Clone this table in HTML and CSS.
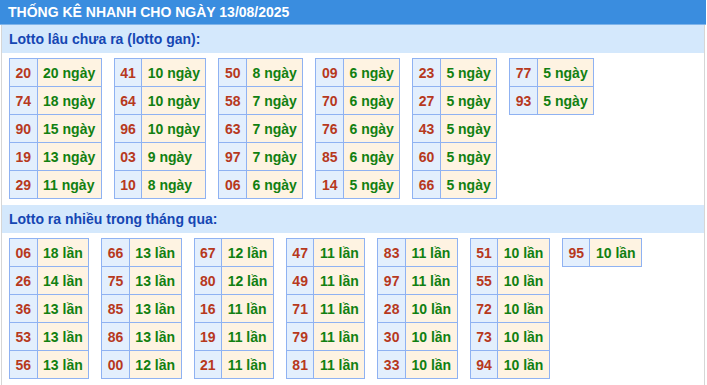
FILE: index.html
```html
<!DOCTYPE html>
<html lang="vi">
<head>
<meta charset="utf-8">
<title>Thống kê nhanh</title>
<link rel="stylesheet" href="styles.css">
</head>
<body>
<div class="box">
  <div class="title">THỐNG KÊ NHANH CHO NGÀY 13/08/2025</div>
  <div class="content">
    <div class="subhead">Lotto lâu chưa ra (lotto gan):</div>
    <div class="tables">
      <table class="t"><tr><td class="n">20</td><td class="v">20 ngày</td></tr><tr><td class="n">74</td><td class="v">18 ngày</td></tr><tr><td class="n">90</td><td class="v">15 ngày</td></tr><tr><td class="n">19</td><td class="v">13 ngày</td></tr><tr><td class="n">29</td><td class="v">11 ngày</td></tr></table>
      <table class="t"><tr><td class="n">41</td><td class="v">10 ngày</td></tr><tr><td class="n">64</td><td class="v">10 ngày</td></tr><tr><td class="n">96</td><td class="v">10 ngày</td></tr><tr><td class="n">03</td><td class="v">9 ngày</td></tr><tr><td class="n">10</td><td class="v">8 ngày</td></tr></table>
      <table class="t"><tr><td class="n">50</td><td class="v">8 ngày</td></tr><tr><td class="n">58</td><td class="v">7 ngày</td></tr><tr><td class="n">63</td><td class="v">7 ngày</td></tr><tr><td class="n">97</td><td class="v">7 ngày</td></tr><tr><td class="n">06</td><td class="v">6 ngày</td></tr></table>
      <table class="t"><tr><td class="n">09</td><td class="v">6 ngày</td></tr><tr><td class="n">70</td><td class="v">6 ngày</td></tr><tr><td class="n">76</td><td class="v">6 ngày</td></tr><tr><td class="n">85</td><td class="v">6 ngày</td></tr><tr><td class="n">14</td><td class="v">5 ngày</td></tr></table>
      <table class="t"><tr><td class="n">23</td><td class="v">5 ngày</td></tr><tr><td class="n">27</td><td class="v">5 ngày</td></tr><tr><td class="n">43</td><td class="v">5 ngày</td></tr><tr><td class="n">60</td><td class="v">5 ngày</td></tr><tr><td class="n">66</td><td class="v">5 ngày</td></tr></table>
      <table class="t"><tr><td class="n">77</td><td class="v">5 ngày</td></tr><tr><td class="n">93</td><td class="v">5 ngày</td></tr></table>
    </div>
    <div class="subhead">Lotto ra nhiều trong tháng qua:</div>
    <div class="tables">
      <table class="t"><tr><td class="n">06</td><td class="v">18 lần</td></tr><tr><td class="n">26</td><td class="v">14 lần</td></tr><tr><td class="n">36</td><td class="v">13 lần</td></tr><tr><td class="n">53</td><td class="v">13 lần</td></tr><tr><td class="n">56</td><td class="v">13 lần</td></tr></table>
      <table class="t"><tr><td class="n">66</td><td class="v">13 lần</td></tr><tr><td class="n">75</td><td class="v">13 lần</td></tr><tr><td class="n">85</td><td class="v">13 lần</td></tr><tr><td class="n">86</td><td class="v">13 lần</td></tr><tr><td class="n">00</td><td class="v">12 lần</td></tr></table>
      <table class="t"><tr><td class="n">67</td><td class="v">12 lần</td></tr><tr><td class="n">80</td><td class="v">12 lần</td></tr><tr><td class="n">16</td><td class="v">11 lần</td></tr><tr><td class="n">19</td><td class="v">11 lần</td></tr><tr><td class="n">21</td><td class="v">11 lần</td></tr></table>
      <table class="t"><tr><td class="n">47</td><td class="v">11 lần</td></tr><tr><td class="n">49</td><td class="v">11 lần</td></tr><tr><td class="n">71</td><td class="v">11 lần</td></tr><tr><td class="n">79</td><td class="v">11 lần</td></tr><tr><td class="n">81</td><td class="v">11 lần</td></tr></table>
      <table class="t"><tr><td class="n">83</td><td class="v">11 lần</td></tr><tr><td class="n">97</td><td class="v">11 lần</td></tr><tr><td class="n">28</td><td class="v">10 lần</td></tr><tr><td class="n">30</td><td class="v">10 lần</td></tr><tr><td class="n">33</td><td class="v">10 lần</td></tr></table>
      <table class="t"><tr><td class="n">51</td><td class="v">10 lần</td></tr><tr><td class="n">55</td><td class="v">10 lần</td></tr><tr><td class="n">72</td><td class="v">10 lần</td></tr><tr><td class="n">73</td><td class="v">10 lần</td></tr><tr><td class="n">94</td><td class="v">10 lần</td></tr></table>
      <table class="t"><tr><td class="n">95</td><td class="v">10 lần</td></tr></table>
    </div>
  </div>
</div>
</body>
</html>
```
FILE: styles.css
```css
html, body {
  margin: 0;
  padding: 0;
  background: #ffffff;
}
body {
  font-family: "Liberation Sans", Arial, sans-serif;
}
.box {
  width: 706px;
}
.title {
  height: 25px;
  box-sizing: border-box;
  background: #3a8ddf;
  border-bottom: 1px solid #7fb4ea;
  color: #ffffff;
  font-weight: bold;
  font-size: 14px;
  line-height: 24px;
  padding-left: 8px;
}
.content {
  margin: 0 1px;
  border-left: 1px solid #d6d6d6;
  border-right: 1px solid #d6d6d6;
  padding-bottom: 8px;
}
.subhead {
  height: 28px;
  background: #d4e8fc;
  color: #1546b3;
  font-weight: bold;
  font-size: 14px;
  line-height: 28px;
  padding-left: 7px;
}
.tables {
  display: flex;
  align-items: flex-start;
  gap: 12px;
  padding: 5px 0 6px 7px;
}
.t {
  border-collapse: collapse;
}
.t td {
  border: 1px solid #8fb2f2;
  height: 28px;
  padding: 0 5.5px;
  font-size: 14px;
  font-weight: bold;
  box-sizing: border-box;
  white-space: nowrap;
}
.t .n {
  background: #e3effd;
  color: #b7391d;
  text-align: center;
}
.t .v {
  background: #fef3e2;
  color: #118011;
}
```
